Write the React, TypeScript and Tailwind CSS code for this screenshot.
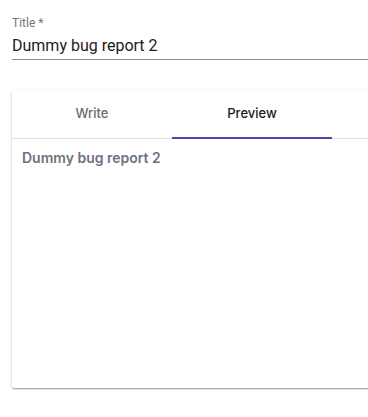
import React from "react";

export default function App() {
  return (
    <div className="w-[368px] h-[417px] overflow-hidden bg-white" style={{ fontFamily: "Roboto, 'Liberation Sans', sans-serif" }}>
      <div className="pl-3 pt-[16px]">
        <div className="text-[12px] leading-[14px] text-[#757575]">Title *</div>
        <div className="mt-[3px] h-[25px] text-[16px] leading-[25px] text-[#212121] border-b border-[#8c8c8c] box-content pb-[1px]">
          Dummy bug report 2
        </div>
      </div>
      <div
        className="ml-3 mt-[30px] w-[420px] h-[298px] bg-white rounded-[2px] shadow-[0_1px_3px_rgba(0,0,0,0.2),0_1px_1px_rgba(0,0,0,0.14),0_2px_1px_-1px_rgba(0,0,0,0.12)] flex flex-col"
        style={{ fontFamily: "Inter, 'Noto Sans', sans-serif" }}
      >
        <div className="flex h-[49px] border-b border-[#e0e0e0]">
          <div className="w-[160px] flex items-center justify-center text-[13px] font-medium text-[#6b6b6b]">Write</div>
          <div className="w-[160px] relative flex items-center justify-center text-[13px] font-medium text-[#1a1a1a]">
            Preview
            <div className="absolute left-0 right-0 bottom-[-1px] h-[2px] bg-[#4f46b5]" />
          </div>
        </div>
        <div className="px-[10px] pt-[8px] text-[14px] font-semibold text-[#6b7280]">Dummy bug report 2</div>
      </div>
    </div>
  );
}
